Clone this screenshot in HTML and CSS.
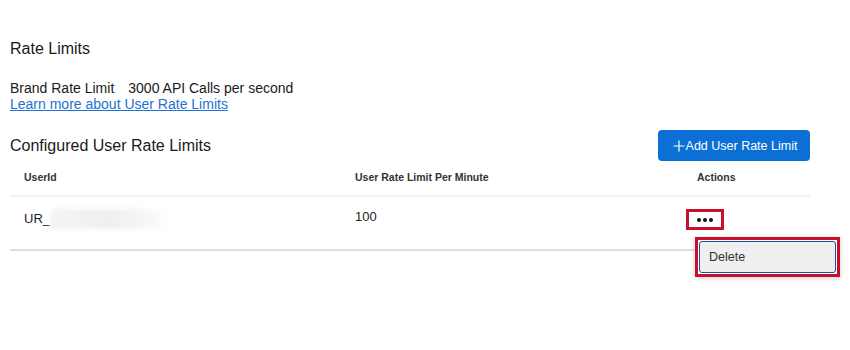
FILE: index.html
```html
<!DOCTYPE html>
<html>
<head>
<meta charset="utf-8">
<link rel="stylesheet" href="styles.css">
</head>
<body>
<div class="page">
  <h1 class="title">Rate Limits</h1>
  <div class="brand"><span>Brand Rate Limit</span><span>3000 API Calls per second</span></div>
  <a class="link" href="#">Learn more about User Rate Limits</a>
  <div class="bar">
    <h2 class="title">Configured User Rate Limits</h2>
    <button class="add"><svg width="12" height="12" viewBox="0 0 12 12"><path d="M6 0.5V11.5M0.5 6H11.5" stroke="#fff" stroke-width="1.2"/></svg>Add User Rate Limit</button>
  </div>
  <div class="table">
    <div class="row head">
      <div class="cell">UserId</div>
      <div class="cell">User Rate Limit Per Minute</div>
      <div class="cell">Actions</div>
    </div>
    <div class="row data">
      <div class="cell">UR_<span class="blur"></span></div>
      <div class="cell">100</div>
      <div class="cell actions">
        <button class="more"><span class="dot"></span><span class="dot"></span><span class="dot"></span></button>
        <div class="menu"><div class="item">Delete</div></div>
      </div>
    </div>
  </div>
</div>
</body>
</html>
```
FILE: styles.css
```css
* { box-sizing: border-box; }
html, body { min-height: 350px; }
body {
  margin: 0;
  background: #fff;
  font-family: "Liberation Sans", Arial, sans-serif;
  color: #1a1a1a;
}
.page {
  padding: 39px 0 0 10px;
  width: 810px;
  min-height: 350px;
  display: flex;
  flex-direction: column;
}
.title {
  margin: 0;
  font-size: 16px;
  font-weight: 400;
  line-height: 20px;
  color: #1a1a1a;
}
.brand {
  margin-top: 21px;
  font-size: 14px;
  line-height: 16px;
  display: flex;
  gap: 14px;
}
.link {
  font-size: 14px;
  line-height: 16px;
  color: #1d72d4;
  text-decoration: underline;
  align-self: flex-start;
}
.bar {
  margin-top: 18px;
  display: flex;
  justify-content: space-between;
  align-items: center;
  height: 31px;
}
.add {
  height: 31px;
  width: 152px;
  border: none;
  border-radius: 4px;
  background: #0b6fd6;
  color: #fff;
  font-family: "Liberation Sans", Arial, sans-serif;
  font-size: 12.5px;
  display: flex;
  align-items: center;
  justify-content: center;
  gap: 1px;
  padding: 0 0 0 2px;
}
.table { display: flex; flex-direction: column; }
.row {
  display: grid;
  grid-template-columns: 331px 342px 127px;
}
.head {
  height: 36px;
  border-bottom: 2px solid #f1f1f1;
  align-items: center;
  font-size: 10.5px;
  font-weight: 700;
  color: #333;
  padding-bottom: 2px;
}
.cell { padding-left: 14px; }
.data {
  height: 54px;
  border-bottom: 2px solid #dedede;
  font-size: 13px;
  line-height: 16px;
  padding-top: 12px;
  color: #222;
  align-items: start;
}
.data .cell:first-child { display: flex; align-items: center; }
.blur {
  display: inline-block;
  width: 122px;
  height: 20px;
  background: linear-gradient(90deg, #f4f4f4 0%, #efefef 50%, #f7f7f7 80%, #ffffff 100%);
  filter: blur(2px);
}
.actions { position: relative; padding-left: 3px; }
.more {
  width: 38px;
  height: 21px;
  border: 3px solid #c8102e;
  background: #fff;
  display: flex;
  align-items: center;
  justify-content: center;
  gap: 2px;
  padding: 0;
}
.dot {
  width: 4px;
  height: 4px;
  border-radius: 50%;
  background: #111;
}
.menu {
  position: absolute;
  top: 28px;
  left: 12px;
  width: 145px;
  height: 40px;
  background: #fff;
  border: 3px solid #c8102e;
  box-shadow: 0 1px 5px rgba(0,0,0,0.2);
  padding: 1px;
  z-index: 2;
}
.item {
  height: 100%;
  border: 1.5px solid #1c4f9c;
  border-radius: 3px;
  background: #efefef;
  font-size: 12.5px;
  color: #333;
  display: flex;
  align-items: center;
  padding-left: 9px;
}
```
